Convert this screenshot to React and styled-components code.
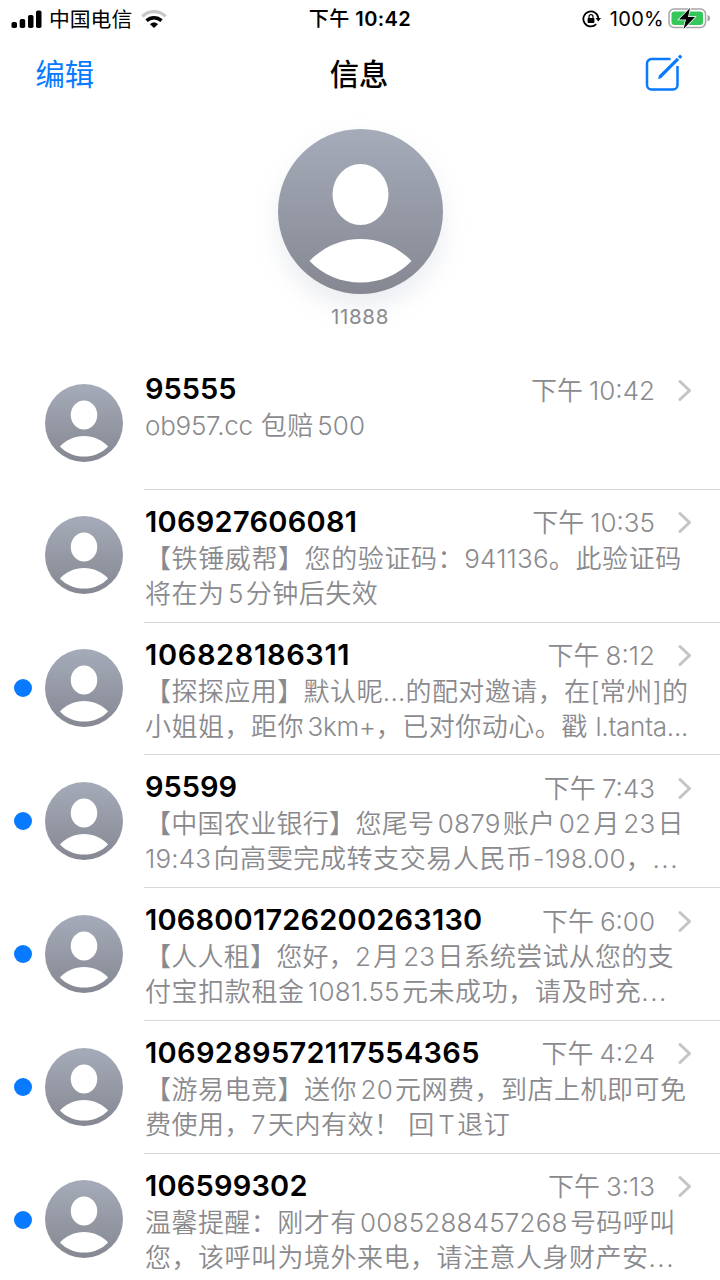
import React from 'react';
import styled, { createGlobalStyle } from 'styled-components';

const threads = [
  { name: '95555', time: '10:42', lines: ['ob957.cc 包赔500'] },
  { name: '106927606081', tracking: .28, time: '10:35', lines: ['【铁锤威帮】您的验证码：941136。此验证码', '将在为5分钟后失效'], spacing: [.6] },
  { name: '106828186311', tracking: .65, time: '8:12', unread: true, lines: ['【探探应用】默认昵...的配对邀请，在[常州]的', '小姐姐，距你3km+，已对你动心。戳 l.tanta...'], spacing: [.43] },
  { name: '95599', time: '7:43', unread: true, lines: ['【中国农业银行】您尾号0879账户02月23日', '19:43向高雯完成转支交易人民币-198.00，...'], spacing: [.3, .6] },
  { name: '1068001726200263130', tracking: .2, time: '6:00', unread: true, lines: ['【人人租】您好，2月23日系统尝试从您的支', '付宝扣款租金1081.55元未成功，请及时充...'], spacing: [.25, .6] },
  { name: '1069289572117554365', tracking: .32, time: '4:24', unread: true, lines: ['【游易电竞】送你20元网费，到店上机即可免', '费使用，7天内有效！ 回T退订'] },
  { name: '106599302', tracking: .2, time: '3:13', unread: true, lines: ['温馨提醒：刚才有0085288457268号码呼叫', '您，该呼叫为境外来电，请注意人身财产安...'], spacing: [.45] }
];

const Avatar = ({ size, id }) => (
  <svg width={size} height={size} viewBox='0 0 165 165'>
    <defs>
      <linearGradient id={id} x1='0' y1='0' x2='0' y2='1'>
        <stop offset='0' stopColor='#a5abb9' />
        <stop offset='1' stopColor='#858892' />
      </linearGradient>
    </defs>
    <circle cx='82.5' cy='82.5' r='82.5' fill={`url(#${id})`} />
    <ellipse cx='82.5' cy='65.5' rx='28' ry='30.5' fill='#fff' />
    <path d='M31.5 132C45 118 63 110 82.5 110S120 118 133.5 132C120 146 102 153.5 82.5 153.5S45 146 31.5 132Z' fill='#fff' />
  </svg>
);

const isHan = char => /[\u4e00-\u9fff]/.test(char || '');
const isWord = char => /[0-9A-Za-z]/.test(char || '');

const getTracking = (run, isLast) => {
  if (run === '...' && isLast) return 1.5;
  return /[a-z]/.test(run) ? -.25 : .2;
};

// Latin runs are tracked separately, with a thin gap next to Chinese characters
const Preview = ({ text, spacing }) => {
  const runs = text.split(/([!-~]+)/);

  return (
    <Line $spacing={spacing}>
      {runs.map((run, i) => (
        i % 2 ?
          <Latin
            key={i}
            $before={isHan(runs[i - 1].slice(-1)) && isWord(run[0])}
            $after={isHan(runs[i + 1][0]) && isWord(run.slice(-1))}
            $tracking={getTracking(run, !runs[i + 1])}
          >
            {run}
          </Latin>
        : run
      ))}
    </Line>
  );
};

const Thread = ({ name, tracking, time, lines, spacing = [], unread }) => (
  <Row>
    <Marker>{unread && <Dot />}</Marker>
    <Picture><Avatar size={78} id={`avatar-${name}`} /></Picture>
    <Body>
      <Heading>
        <Name $tracking={tracking}>{name}</Name>
        <Time>下午<TimeDigits>{time}</TimeDigits></Time>
        <svg width='14' height='22' viewBox='0 0 14 22' fill='none' stroke='#c4c4c7' strokeWidth='3' strokeLinecap='round' strokeLinejoin='round'>
          <path d='M2 2.5L11.5 11.5L2 20.5' />
        </svg>
      </Heading>
      {lines.map((line, i) => <Preview key={line} text={line} spacing={spacing[i]} />)}
    </Body>
  </Row>
);

const App = () => (
  <Screen>
    <GlobalStyle />
    <StatusBar>
      <Carrier>
        <svg width='31' height='19' viewBox='0 0 31 19'>
          <rect x='0.5' y='13' width='5.5' height='6' rx='1.8' />
          <rect x='8.7' y='10' width='5.5' height='9' rx='1.8' />
          <rect x='17' y='6' width='5.5' height='13' rx='1.8' />
          <rect x='25' y='1.5' width='5.5' height='17.5' rx='1.8' />
        </svg>
        <StatusText>中国电信</StatusText>
        <svg width='26' height='20' viewBox='0 0 26 20' fill='none'>
          <path d='M1.3 7.3C8 1 18 1 24.7 7.3' stroke='#c8c8c8' strokeWidth='3.2' />
          <path d='M5.5 11.6C10 7.7 16 7.7 20.5 11.6' stroke='#000' strokeWidth='3.4' />
          <path d='M13 19L9 15.2C11.3 13 14.7 13 17 15.2Z' fill='#000' />
        </svg>
      </Carrier>
      <Clock>下午 <b>10:42</b></Clock>
      <Battery>
        <svg width='20' height='18' viewBox='0 0 20 18' fill='none' stroke='#000' strokeWidth='1.8'>
          <path d='M14.2 14.2A7.5 7.5 0 1 1 16.3 8' />
          <path d='M13.5 8H19L16.3 11.5Z' fill='#000' stroke='none' />
          <rect x='5.6' y='8' width='6.8' height='5' rx='0.8' fill='#000' stroke='none' />
          <path d='M7 8.5V6.7A2 2 0 0 1 11 6.7V8.5' strokeWidth='1.2' />
        </svg>
        <Percent>100%</Percent>
        <svg width='43' height='21' viewBox='0 0 43 21'>
          <rect x='1' y='1' width='36.5' height='18.5' rx='5' fill='none' stroke='#a6a6a6' strokeWidth='1.5' />
          <rect x='3.5' y='3.5' width='31.5' height='13.5' rx='3' fill='#34c759' />
          <path d='M39.5 7C43 8 43 12.5 39.5 13.5Z' fill='#a6a6a6' />
          <path d='M22 0L11 11.5H18L15.5 21L27 9H20Z' fill='#000' stroke='#fff' strokeWidth='1.5' paintOrder='stroke' />
        </svg>
      </Battery>
    </StatusBar>
    <NavBar>
      <Edit>编辑</Edit>
      <Title>信息</Title>
      <Compose>
        <svg width='38' height='38' viewBox='0 0 38 38' fill='none' stroke='#087aff' strokeWidth='2.5'>
          <path d='M25.5 5H6.5A4.5 4.5 0 0 0 2 9.5V31A4.5 4.5 0 0 0 6.5 35.5H28A4.5 4.5 0 0 0 32.5 31V12' />
          <path d='M14.8 23L33 4.8' strokeWidth='3.2' />
          <path d='M13 25L14 21.5L16.6 23.9Z' fill='#087aff' stroke='none' />
          <path d='M34 3.8L36.2 1.6' strokeWidth='3.2' />
        </svg>
      </Compose>
    </NavBar>
    <Pinned>
      <PinnedPicture><Avatar size={165} id='avatar-pinned' /></PinnedPicture>
      <PinnedName>11888</PinnedName>
    </Pinned>
    {threads.map(thread => <Thread key={thread.name} {...thread} />)}
  </Screen>
);

const GlobalStyle = createGlobalStyle`
  body {
    margin: 0;
    background: #fff;
  }

  svg {
    display: block;
    flex: none;
  }
`;

const Screen = styled.div`
  width: 720px;
  height: 1280px;
  overflow: hidden;
  background: #fff;
  color: #000;
  font-family: Inter, 'Noto Sans CJK SC', sans-serif;
  white-space: nowrap;
`;

const StatusBar = styled.div`
  display: grid;
  grid-template-columns: 1fr auto 1fr;
  align-items: center;
  height: 37px;
  padding: 0 9px 0 11px;
`;

const Carrier = styled.div`
  display: flex;
  align-items: center;
`;

const StatusText = styled.span`
  margin: 0 9px 0 7px;
  padding-bottom: 2px;
  font-size: 20.8px;
`;

const Clock = styled.span`
  padding: 0 2px 2px 0;
  font-size: 20px;
  font-weight: 500;
  letter-spacing: .4px;

  b {
    font-weight: 600;
  }
`;

const Battery = styled.div`
  display: flex;
  align-items: center;
  justify-content: flex-end;
`;

const Percent = styled.span`
  margin: 0 4px 0 8px;
  font-size: 20px;
  letter-spacing: .3px;
`;

const NavBar = styled.div`
  display: grid;
  grid-template-columns: 1fr auto 1fr;
  align-items: center;
  height: 74px;
  padding: 0 37.5px 0 35.5px;
  line-height: 40px;
`;

const Edit = styled.span`
  padding-top: 2px;
  color: #087aff;
  font-size: 29.3px;
`;

const Title = styled.span`
  padding-top: 2px;
  font-size: 29.3px;
  font-weight: 500;
`;

const Compose = styled.div`
  display: flex;
  justify-content: flex-end;
  padding-bottom: 3px;
`;

const Pinned = styled.div`
  display: flex;
  flex-direction: column;
  align-items: center;
  height: 246px;
  padding-top: 18px;
  box-sizing: border-box;
`;

const PinnedPicture = styled.div`
  border-radius: 50%;
  box-shadow: 0 12px 24px rgba(130, 140, 165, .17);
`;

const PinnedName = styled.span`
  margin-top: 10px;
  color: #8a8a8e;
  font-size: 20.5px;
  line-height: 26px;
  letter-spacing: .7px;
`;

const Row = styled.div`
  display: flex;
  height: 132.8px;
`;

const Marker = styled.div`
  display: flex;
  align-items: center;
  width: 45.4px;
  padding: 0 0 1px 14px;
  box-sizing: border-box;
`;

const Dot = styled.span`
  width: 18px;
  height: 18px;
  border-radius: 50%;
  background: #087aff;
`;

const Picture = styled.div`
  display: flex;
  align-items: center;
  width: 98.6px;
  padding-bottom: 1.5px;
  box-sizing: border-box;
`;

const Body = styled.div`
  flex: 1;
  min-width: 0;
  padding: 14px 0 0 1px;
  box-sizing: border-box;
  border-bottom: 1px solid #d8d8da;
`;

const Heading = styled.div`
  display: flex;
  align-items: center;
  height: 37px;
  padding-right: 28px;
`;

const Name = styled.span`
  flex: 1;
  padding-bottom: 2px;
  font-size: 29px;
  font-weight: 600;
  letter-spacing: ${({ $tracking = 0 }) => $tracking}px;
`;

const Time = styled.span`
  margin-right: 23px;
  padding-bottom: 3px;
  color: #8a8a8e;
  font-size: 26px;
  font-weight: 350;
`;

const TimeDigits = styled.span`
  margin-left: 6px;
`;

const Line = styled.div`
  height: 35px;
  color: #8a8a8e;
  font-size: 26px;
  font-weight: 350;
  line-height: 35px;
  letter-spacing: ${({ $spacing = .5 }) => $spacing}px;
`;

const Latin = styled.span`
  margin-left: ${({ $before }) => $before ? 3.5 : 0}px;
  margin-right: ${({ $after }) => $after ? 2.2 : 0}px;
  letter-spacing: ${({ $tracking }) => $tracking}px;
`;

export default App;
